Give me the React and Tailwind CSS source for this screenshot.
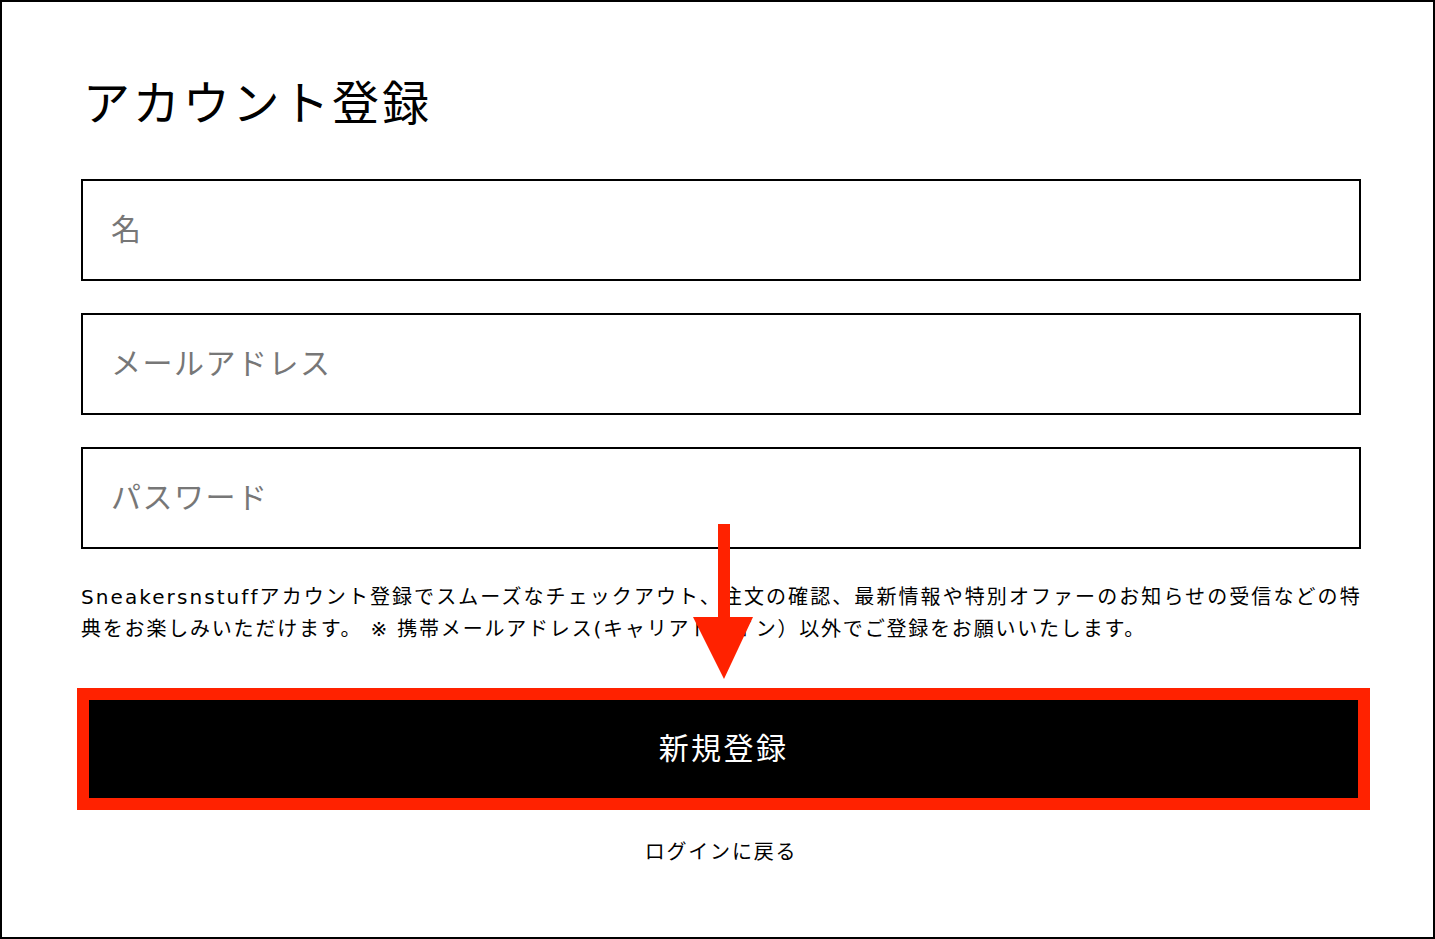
import React from 'react'

const jp = 'font-["Noto_Sans_CJK_JP","Noto_Sans",sans-serif]'

function Field({ label }) {
  return (
    <div className="h-[102px] border-2 border-black flex items-center pl-[28px] pb-[6px]">
      <span className="text-[30px] leading-none tracking-[0.05em] text-[#777777]">{label}</span>
    </div>
  )
}

export default function App() {
  return (
    <div className={`relative w-[1435px] h-[939px] border-2 border-black bg-white text-black ${jp}`}>
      <div className="flex flex-col pl-[79px] pr-[72px]">
        <h1 className="mt-[74px] h-[48px] leading-[48px] text-[47px] font-normal tracking-[0.06em] pl-[2px]">
          アカウント登録
        </h1>

        <div className="mt-[55px] flex flex-col gap-[32px]">
          <Field label="名" />
          <Field label="メールアドレス" />
          <Field label="パスワード" />
        </div>

        <p className='mt-[32px] text-[20px] leading-[32px] whitespace-nowrap font-["DejaVu_Sans","Noto_Sans_CJK_JP",sans-serif]'>
          <span className="tracking-[0.104em]">
            Sneakersnstuffアカウント登録でスムーズなチェックアウト、注文の確認、最新情報や特別オファーのお知らせの受信などの特
          </span>
          <br />
          <span className="tracking-[0.09em]">
            典をお楽しみいただけます。 ※ 携帯メールアドレス(キャリアドメイン）以外でご登録をお願いいたします。
          </span>
        </p>

        {/* red annotation frame round the button */}
        <div className="mt-[43px] -ml-[4px] w-[1293px] h-[122px] border-[12px] border-[#ff2200]">
          <button className="w-full h-full bg-black text-white text-[30px] tracking-[0.08em] flex items-center justify-center pb-[6px]">
            新規登録
          </button>
        </div>

        <div className="mt-[25px] text-center text-[20px] leading-[32px] tracking-[0.09em]">
          ログインに戻る
        </div>
      </div>

      {/* annotation arrow */}
      <svg className="absolute left-[691px] top-[522px]" width="60" height="155" viewBox="0 0 60 155">
        <rect x="25" y="0" width="12" height="100" fill="#ff2200" />
        <polygon points="0,93 60,93 31,155" fill="#ff2200" />
      </svg>
    </div>
  )
}
